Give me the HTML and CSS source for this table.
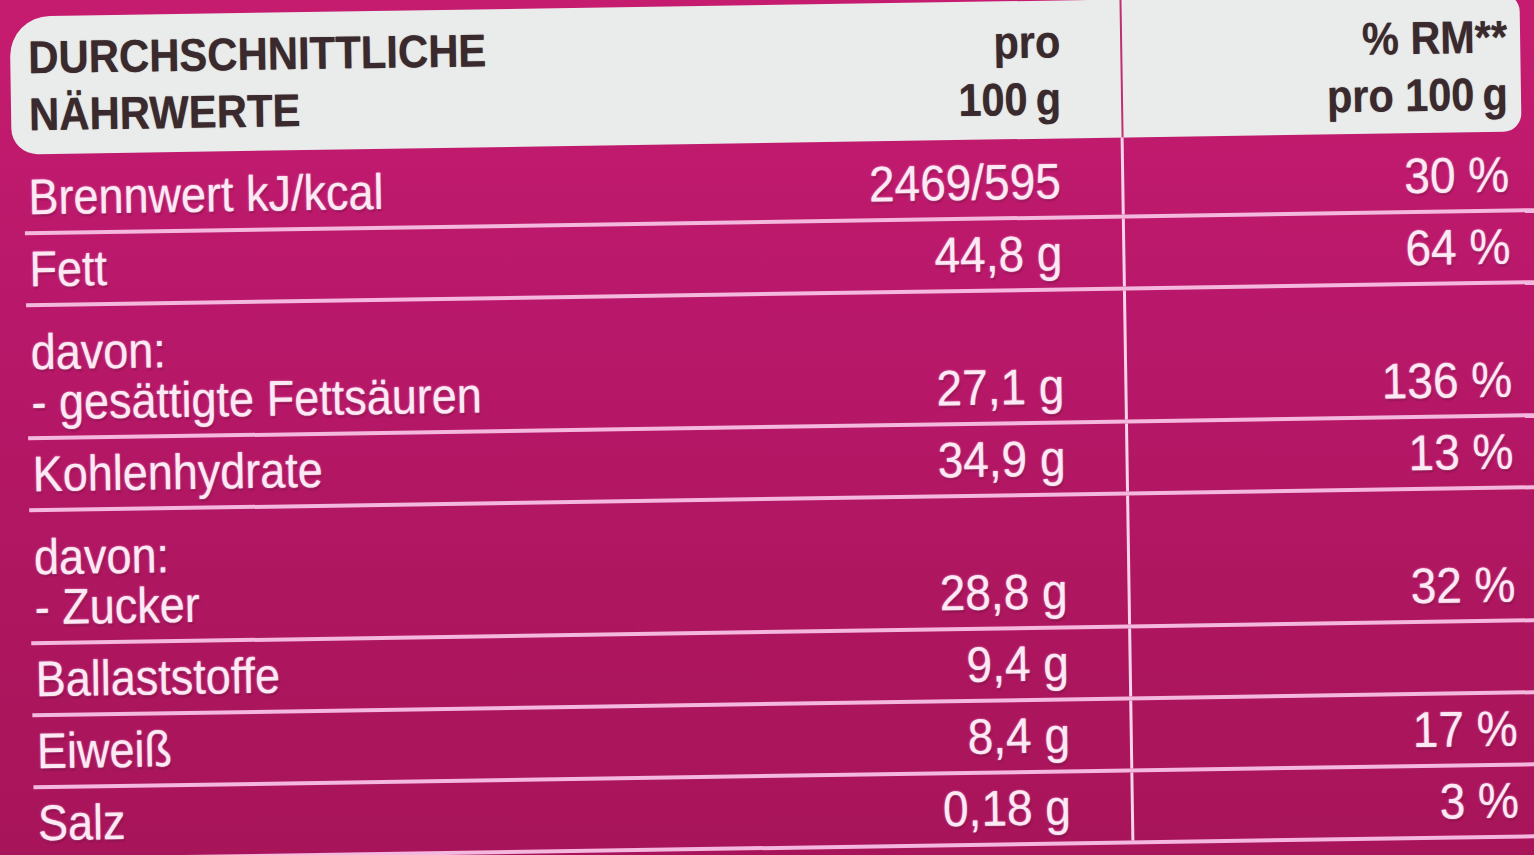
FILE: index.html
```html
<!DOCTYPE html>
<html lang="de">
<head>
<meta charset="utf-8">
<title>Durchschnittliche Nährwerte</title>
<link rel="stylesheet" href="styles.css">
</head>
<body>
<div class="label">
  <div class="head">
    <div class="hc1">
      <div class="htitle">DURCHSCHNITTLICHE<br>NÄHRWERTE</div>
      <div class="hval">pro<br>100&#8201;g</div>
    </div>
    <div class="hc2"><div class="hval">% RM**<br>pro 100&#8201;g</div></div>
  </div>

  <div class="row first">
    <div class="c1"><span class="name">Brennwert kJ/kcal</span><span class="val">2469/595</span></div>
    <div class="c2"><span class="val">30 %</span></div>
  </div>
  <div class="row">
    <div class="c1"><span class="name">Fett</span><span class="val">44,8 g</span></div>
    <div class="c2"><span class="val">64 %</span></div>
  </div>
  <div class="row tall">
    <div class="c1"><span class="name">davon:<br>- gesättigte Fettsäuren</span><span class="val">27,1 g</span></div>
    <div class="c2"><span class="val">136 %</span></div>
  </div>
  <div class="row">
    <div class="c1"><span class="name">Kohlenhydrate</span><span class="val">34,9 g</span></div>
    <div class="c2"><span class="val">13 %</span></div>
  </div>
  <div class="row tall">
    <div class="c1"><span class="name">davon:<br>- Zucker</span><span class="val">28,8 g</span></div>
    <div class="c2"><span class="val">32 %</span></div>
  </div>
  <div class="row">
    <div class="c1"><span class="name">Ballaststoffe</span><span class="val">9,4 g</span></div>
    <div class="c2"></div>
  </div>
  <div class="row">
    <div class="c1"><span class="name">Eiweiß</span><span class="val">8,4 g</span></div>
    <div class="c2"><span class="val">17 %</span></div>
  </div>
  <div class="row">
    <div class="c1"><span class="name">Salz</span><span class="val">0,18 g</span></div>
    <div class="c2"><span class="val">3 %</span></div>
  </div>
</div>
</body>
</html>
```

FILE: styles.css
```css
html, body {
  margin: 0;
  padding: 0;
  width: 100%;
  height: 100%;
  overflow: hidden;
}

body {
  background: linear-gradient(to bottom, #c61c70 0%, #b9186a 35%, #ad165e 75%, #a8145a 100%);
  font-family: "Liberation Sans", Arial, sans-serif;
}

.label {
  width: 1560px;
  height: 860px;
  padding-top: 5px;
  box-sizing: border-box;
  transform: rotate(-0.88deg);
  transform-origin: 767px 427px;
}

/* header */
.head {
  display: grid;
  grid-template-columns: 1112px 1fr;
  margin-left: 16px;
  width: 1510px;
  height: 138px;
  box-sizing: border-box;
  background: #eaeceb;
  border-radius: 40px 18px 18px 26px;
  color: #3a2a2d;
  font-weight: bold;
  font-size: 46px;
  line-height: 57px;
  text-shadow: 0 0 1px rgba(58, 42, 45, 0.7);
}

.hc1 {
  display: flex;
  justify-content: space-between;
  padding: 13px 60px 0 18px;
  box-sizing: border-box;
  border-right: 2px solid #c0306f;
}

.htitle {
  transform: scaleX(0.91);
  transform-origin: left center;
}

.hval {
  text-align: right;
  transform: scaleX(0.9);
  transform-origin: right center;
}

.hc2 {
  display: flex;
  justify-content: flex-end;
  padding: 15px 13px 0 0;
}

/* body rows */
.row {
  display: grid;
  grid-template-columns: 1100px 1fr;
  margin-left: 28px;
  height: 72px;
  box-sizing: border-box;
  border-bottom: 4px solid #f4b8df;
  color: #fbe9f4;
  font-size: 50px;
  line-height: 50px;
  text-shadow: 0 0 2px #ff9fd6, 1px 2px 2px rgba(80, 0, 40, 0.45);
}

.row.first {
  height: 81px;
}

.row.tall {
  height: 133px;
}

.c1 {
  display: flex;
  justify-content: space-between;
  align-items: flex-end;
  padding: 0 60px 9px 4px;
  box-sizing: border-box;
  border-right: 3px solid #f7d4eb;
}

.c2 {
  display: flex;
  justify-content: flex-end;
  align-items: flex-end;
  padding: 0 47px 9px 0;
}

.name {
  transform: scaleX(0.9);
  transform-origin: left bottom;
}

.val {
  transform: scaleX(0.92);
  transform-origin: right bottom;
  white-space: nowrap;
}
```
